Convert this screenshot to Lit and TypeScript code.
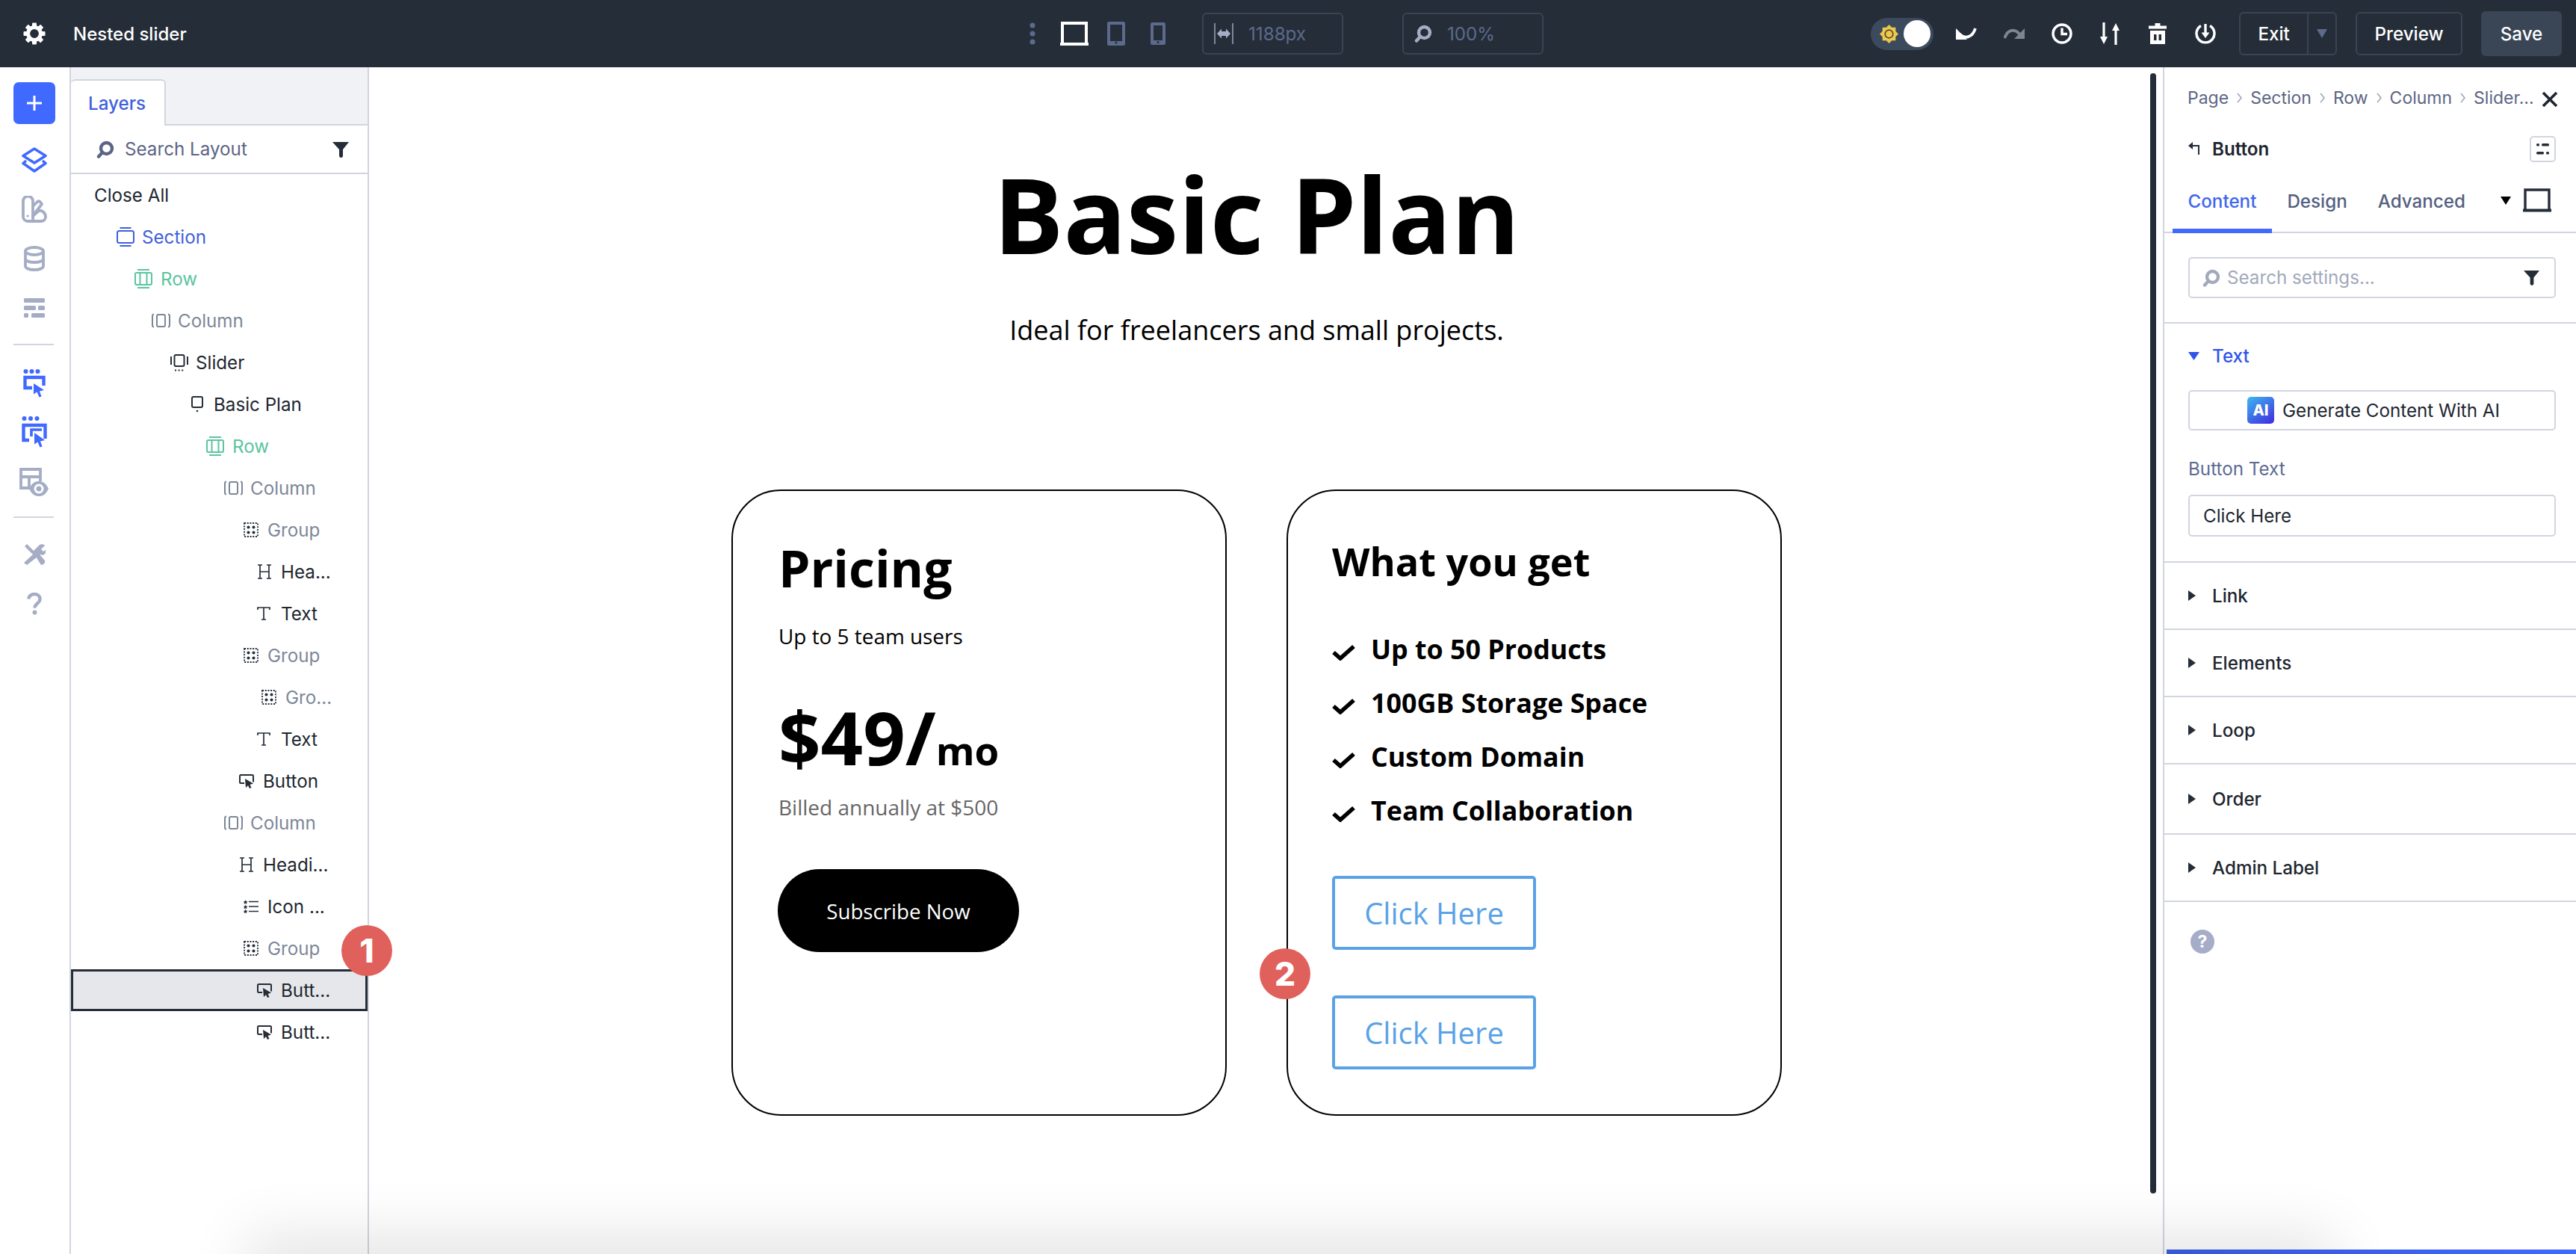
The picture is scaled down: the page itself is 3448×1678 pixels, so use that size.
import { LitElement, html, svg, css } from "lit";
import { customElement } from "lit/decorators.js";

const searchIcon = (c: string, s = 24) => html`<svg width=${s} height=${s} viewBox="0 0 24 24" fill="none"><circle cx="13.5" cy="10.5" r="7.5" stroke=${c} stroke-width="4.4"/><path d="M8 16L3 21.5" stroke=${c} stroke-width="4.4" stroke-linecap="round"/></svg>`;
const funnel = (s = 22) => html`<svg width=${s} height=${s} viewBox="0 0 22 22"><path d="M0 1h22l-8 10v9a2.6 2.6 0 0 1-5 0v-9z" fill="#252d38"/></svg>`;
const ANG = [0, 45, 90, 135, 180, 225, 270, 315];
const gear = () => html`<svg width="30" height="30" viewBox="-15 -15 30 30"><circle r="8.4" fill="none" stroke="#fff" stroke-width="5"/>${ANG.map((a) => svg`<rect x="-3" y="-14.5" width="6" height="6" rx="1" fill="#fff" transform="rotate(${a})"/>`)}</svg>`;
const cursorBox = (c: string) => html`<svg width="30" height="38" viewBox="0 0 30 38" fill="none"><circle cx="3.5" cy="3" r="3" fill=${c}/><circle cx="11.5" cy="3" r="3" fill=${c}/><circle cx="19.5" cy="3" r="3" fill=${c}/><path d="M12 25H2.500V11h25v11" stroke=${c} stroke-width="4.4"/><path d="M14 19l14 9-6 1.500 2.500 7-3 1-3-7-4.500 3z" fill=${c}/></svg>`;
const cursorBox2 = (c: string) => html`<svg width="34" height="44" viewBox="0 0 34 44" fill="none"><circle cx="3.500" cy="3" r="3" fill=${c}/><circle cx="12" cy="3" r="3" fill=${c}/><circle cx="20.500" cy="3" r="3" fill=${c}/><path d="M10 32H2.500V12h29v18" stroke=${c} stroke-width="4.400"/><path d="M13 27v-9h14" stroke=${c} stroke-width="3.600"/><path d="M17 22l14 10-6 1.500 2.500 7-3 1-3-7-4.500 3z" fill=${c}/></svg>`;

const tree: Record<string, (c: string) => unknown> = {
  section: (c) => html`<svg width="24" height="26" viewBox="0 0 24 26" fill="none" stroke=${c} stroke-width="2"><rect x="1" y="5" width="22" height="16" rx="2.500"/><path d="M4.500 1h15M4.500 25h15"/></svg>`,
  row: (c) => html`<svg width="24" height="26" viewBox="0 0 24 26" fill="none" stroke=${c} stroke-width="2"><rect x="1" y="5" width="22" height="16" rx="2"/><path d="M7.500 5v16M16.500 5v16M4 1h16M4 25h16"/></svg>`,
  column: (c) => html`<svg width="25" height="20" viewBox="0 0 25 20" fill="none" stroke=${c} stroke-width="2"><rect x="7" y="2" width="11" height="16" rx="2"/><path d="M3 1.500C1.500 1.500 1 2 1 4v12c0 2 .5 2.500 2 2.500M22 1.500c1.500 0 2 .5 2 2.500v12c0 2-.5 2.500-2 2.500"/></svg>`,
  slider: (c) => html`<svg width="24" height="24" viewBox="0 0 24 24" fill="none" stroke=${c} stroke-width="2"><rect x="5.500" y="2" width="13" height="15" rx="2"/><path d="M1 4v11M23 4v11"/><path d="M6 22.500h13" stroke-dasharray="2 2.600"/></svg>`,
  slide: (c) => html`<svg width="16" height="22" viewBox="0 0 16 22" fill="none" stroke=${c} stroke-width="2"><rect x="1" y="1" width="14" height="14" rx="2"/><circle cx="8" cy="20" r="1.300" fill=${c} stroke="none"/></svg>`,
  group: (c) => html`<svg width="20" height="20" viewBox="0 0 20 20" fill=${c}><rect x="1" y="1" width="18" height="18" fill="none" stroke=${c} stroke-width="1.800" stroke-dasharray="2 1.700"/><circle cx="6.500" cy="6.500" r="2"/><circle cx="13.500" cy="6.500" r="2"/><circle cx="6.500" cy="13.500" r="2"/><circle cx="13.500" cy="13.500" r="2"/></svg>`,
  h: (c) => html`<svg width="20" height="20" viewBox="0 0 20 20" fill="none" stroke=${c} stroke-width="1.700"><path d="M4 1v18M16 1v18M4 10h12M1 1h6M13 1h6M1 19h6M13 19h6"/></svg>`,
  t: (c) => html`<svg width="18" height="18" viewBox="0 0 18 18" fill="none" stroke=${c} stroke-width="1.700"><path d="M1 4V1h16v3M9 1v16M6 17h6"/></svg>`,
  button: (c) => html`<svg width="20" height="20" viewBox="0 0 20 20" fill="none"><path d="M7 13H2.500a1.500 1.500 0 0 1-1.500-1.500v-8A1.500 1.500 0 0 1 2.500 2h15A1.500 1.500 0 0 1 19 3.500v8" stroke=${c} stroke-width="2"/><path d="M8 7l11 6.500-4.500 1.500 2 4-2.500 1-2-4-3 3z" fill=${c}/></svg>`,
  list: (c) => html`<svg width="20" height="18" viewBox="0 0 20 18" fill=${c}><path d="M2.500 0l1 2 2 .2-1.500 1.500.4 2-1.900-1-1.900 1 .4-2L0 2.200 2 2zM2.500 6.500l1 2 2 .2-1.500 1.500.4 2-1.900-1-1.900 1 .4-2L0 8.700l2-.2zM2.500 12.500l1 2 2 .2-1.500 1.500.4 1.800-1.900-.8-1.900.8.4-1.800L0 14.700l2-.2z"/><path d="M7 2.500h13M7 9h13M7 15.500h13" stroke=${c} stroke-width="1.600"/></svg>`,
};

const BLUE = "#3f60dc", GREEN = "#5cc4a0", GREY = "#7d8798", DARK = "#20262f", ICON = "#252d38";
const rows = [
  { t: "Section", k: "section", x: 156, l: 190, c: BLUE, ic: BLUE },
  { t: "Row", k: "row", x: 180, l: 215, c: GREEN, ic: GREEN },
  { t: "Column", k: "column", x: 203, l: 238, c: GREY, ic: GREY },
  { t: "Slider", k: "slider", x: 228, l: 262, c: DARK, ic: ICON },
  { t: "Basic Plan", k: "slide", x: 256, l: 286, c: DARK, ic: ICON },
  { t: "Row", k: "row", x: 276, l: 311, c: GREEN, ic: GREEN },
  { t: "Column", k: "column", x: 300, l: 335, c: GREY, ic: GREY },
  { t: "Group", k: "group", x: 326, l: 358, c: GREY, ic: ICON },
  { t: "Hea...", k: "h", x: 344, l: 376, c: DARK, ic: ICON },
  { t: "Text", k: "t", x: 344, l: 376, c: DARK, ic: ICON },
  { t: "Group", k: "group", x: 326, l: 358, c: GREY, ic: ICON },
  { t: "Gro...", k: "group", x: 350, l: 382, c: GREY, ic: ICON },
  { t: "Text", k: "t", x: 344, l: 376, c: DARK, ic: ICON },
  { t: "Button", k: "button", x: 320, l: 352, c: DARK, ic: ICON },
  { t: "Column", k: "column", x: 300, l: 335, c: GREY, ic: GREY },
  { t: "Headi...", k: "h", x: 320, l: 352, c: DARK, ic: ICON },
  { t: "Icon ...", k: "list", x: 326, l: 358, c: DARK, ic: ICON },
  { t: "Group", k: "group", x: 326, l: 358, c: GREY, ic: ICON },
  { t: "Butt...", k: "button", x: 344, l: 376, c: DARK, ic: ICON, sel: true },
  { t: "Butt...", k: "button", x: 344, l: 376, c: DARK, ic: ICON },
];

const crumbs = ["Page", "Section", "Row", "Column", "Slider..."];
const accordions = ["Link", "Elements", "Loop", "Order", "Admin Label"];
const features = ["Up to 50 Products", "100GB Storage Space", "Custom Domain", "Team Collaboration"];

@customElement("app-root")
export class AppRoot extends LitElement {
  static styles = css`
    :host { display: block; height: 100vh; min-height: 1678px; position: relative; overflow: hidden; background: #fff; font-family: Inter, "Liberation Sans", sans-serif; font-size: 24.2px; color: #20262f; }
    svg { display: block; flex: none; }
    .top { height: 90px; background: #252d38; display: flex; align-items: center; color: #fff; }
    .left { width: 1378px; flex: none; display: flex; align-items: center; }
    .gear { margin-left: 31px; }
    .title { margin-left: 37px; font-weight: 500; font-size: 24px; }
    .center { display: flex; align-items: center; }
    .ml33 { margin-left: 33px; } .ml25 { margin-left: 25px; } .ml34 { margin-left: 34px; } .ml49 { margin-left: 49px; } .ml81 { margin-left: 79px; }
    .readout { width: 189px; height: 56px; box-sizing: border-box; border: 2px solid #3a4452; border-radius: 6px; display: flex; align-items: center; color: #5c6a8c; font-size: 24.2px; }
    .readout svg { margin-left: 14px; }
    .readout span { margin-left: 20px; }
    .right { margin-left: auto; display: flex; align-items: center; padding-right: 19px; }
    .toggle { width: 84px; height: 43px; border-radius: 22px; background: #3c4a5e; display: flex; align-items: center; justify-content: space-between; padding: 0 4px 0 12px; box-sizing: border-box; }
    .knob { width: 36px; height: 36px; border-radius: 50%; background: #fff; }
    .tools { display: flex; margin: 0 13px 0 12px; }
    .tool { width: 64px; height: 30px; display: flex; justify-content: center; align-items: center; }
    .tbtn { height: 58px; box-sizing: border-box; border: 2px solid #3a4452; border-radius: 6px; display: flex; align-items: center; justify-content: center; color: #fff; font-weight: 500; }
    .exit { width: 131px; }
    .exit span { width: 92px; text-align: center; }
    .caretcell { width: 37px; height: 100%; border-left: 2px solid #3a4452; display: flex; align-items: center; justify-content: center; }
    .preview { width: 143px; margin-left: 25px; }
    .save { width: 108px; height: 60px; margin-left: 25px; background: #3a4656; border-radius: 6px; display: flex; align-items: center; justify-content: center; color: #fff; font-weight: 500; }
    .body { display: flex; height: calc(100% - 90px); }
    .rail { width: 95px; box-sizing: border-box; border-right: 2px solid #d2d5de; flex: none; padding: 20px 0 0 18px; }
    .plus { width: 56px; height: 56px; background: #4069ff; border-radius: 7px; display: flex; align-items: center; justify-content: center; }
    .slot { width: 56px; height: 66px; display: flex; align-items: center; justify-content: center; }
    .slots1 { margin-top: 15px; } .slots2 { margin-top: 18px; } .slots3 { margin-top: 16px; }
    .rule { width: 54px; height: 2px; background: #d2d5de; margin-top: 15px; }
    .rule2 { margin-top: 13px; }
    .layers { width: 399px; box-sizing: border-box; border-right: 2px solid #d2d5de; flex: none; }
    .tabbar { height: 78px; background: #f0f2f5; border-bottom: 2px solid #d2d5de; box-sizing: border-box; display: flex; align-items: flex-end; }
    .ltab { width: 127px; height: 62px; margin-bottom: -2px; background: #fff; border: 2px solid #d2d5de; border-left: none; border-bottom: none; border-radius: 6px 6px 0 0; box-sizing: border-box; color: #3f60dc; font-weight: 500; display: flex; align-items: center; padding-left: 23px; font-size: 24.2px; }
    .lsearch { height: 65px; box-sizing: border-box; border-bottom: 2px solid #d2d5de; display: flex; align-items: center; padding: 0 25px 0 34px; color: #5c6485; }
    .lsearch span { margin-left: 14px; flex: 1; }
    .closeall { height: 56px; display: flex; align-items: center; padding-left: 31px; }
    .trow { height: 56px; display: flex; align-items: center; box-sizing: border-box; position: relative; }
    .trow.sel { background: #e6e7ea; outline: 3px solid #252d38; outline-offset: -3px; }
    .ticon { display: flex; align-items: center; flex: none; }
    .canvas { flex: 1; min-width: 0; box-sizing: border-box; padding: 111px 25px 0 0; display: flex; flex-direction: column; align-items: center; font-family: "Open Sans", sans-serif; color: #000; position: relative; }
    h1 { margin: 0; font-size: 139.6px; line-height: 170px; font-weight: 700; }
    .sub { margin-top: 46px; font-size: 36px; line-height: 50px; }
    .cards { margin-top: 188px; display: flex; gap: 80px; }
    .card { width: 663px; height: 838px; box-sizing: border-box; border: 2px solid #000; border-radius: 66px; }
    .c1 { padding: 61px 0 0 60px; } .c2 { padding: 59px 0 0 59px; }
    .pricing { font-size: 67.8px; line-height: 84px; font-weight: 700; padding-left: 1px; }
    .users { margin-top: 29px; font-size: 27.9px; line-height: 40px; padding-left: 1px; }
    .price { margin-top: 60px; font-size: 99px; line-height: 110px; font-weight: 700; padding-left: 1px; white-space: nowrap; }
    .price small { font-size: 52.8px; }
    .billed { margin-top: 1px; font-size: 28px; line-height: 40px; color: #666; padding-left: 1px; }
    .sub-btn { margin-top: 63px; width: 323px; height: 111px; border-radius: 56px; background: #000; color: #fff; display: flex; align-items: center; justify-content: center; font-size: 27.7px; }
    .wyg { font-size: 52.2px; line-height: 70px; font-weight: 700; }
    .feats { margin-top: 46px; }
    .feat { height: 72px; display: flex; align-items: center; font-size: 35.8px; font-weight: 700; gap: 21px; }
    .feat svg { margin-top: 9px; }
    .click { width: 273px; height: 99px; box-sizing: border-box; border: 4px solid #5aa2e6; border-radius: 5px; color: #5aa2e6; display: flex; align-items: center; justify-content: center; font-size: 40px; }
    .click.a { margin-top: 52px; } .click.b { margin-top: 61px; }
    .scroll { position: absolute; right: 9px; top: 8px; width: 8px; height: 1499px; border-radius: 4px; background: #252d38; }
    .panel { width: 553px; flex: none; box-sizing: border-box; border-left: 2px solid #d2d5de; position: relative; }
    .crumbs { height: 82px; display: flex; align-items: center; padding-left: 31px; color: #5c6685; font-size: 23px; }
    .crumbs .sep { margin: 0 11px; }
    .x { position: absolute; left: 505px; top: 32px; }
    .btnrow { height: 54px; display: flex; align-items: center; padding-left: 32px; font-weight: 600; }
    .btnrow span { margin-left: 16px; flex: 1; }
    .mini { width: 35px; height: 35px; box-sizing: border-box; border: 2px solid #d2d5de; border-radius: 5px; margin-right: 27px; display: flex; align-items: center; justify-content: center; }
    .tabs { height: 86px; box-sizing: border-box; border-bottom: 2px solid #d2d5de; display: flex; padding-left: 11px; position: relative; font-weight: 500; color: #555f80; }
    .tab { padding: 0 20.5px; height: 86px; box-sizing: border-box; display: flex; align-items: center; }
    .tab.on { color: #3f66f0; border-bottom: 6px solid #4069ff; padding-top: 6px; }
    .tabend { margin-left: auto; display: flex; align-items: center; padding-right: 32px; gap: 15px; }
    .settings { height: 121px; box-sizing: border-box; border-bottom: 2px solid #d2d5de; padding: 32px 27px 0 32px; }
    .sbox { height: 55px; box-sizing: border-box; border: 2px solid #d2d5de; border-radius: 5px; display: flex; align-items: center; padding: 0 20px 0 17px; color: #a2a9bb; }
    .sbox span { margin-left: 9px; flex: 1; }
    .textsec { height: 320px; box-sizing: border-box; border-bottom: 2px solid #d2d5de; padding: 0 27px 0 32px; }
    .sechead { height: 86px; display: flex; align-items: center; color: #2f55e8; font-weight: 500; }
    .sechead span { margin-left: 17px; }
    .gen { margin-top: 3px; height: 54px; box-sizing: border-box; border: 2px solid #d2d5de; border-radius: 5px; display: flex; align-items: center; justify-content: center; gap: 11px; padding-left: 4px; }
    .ai { width: 36px; height: 36px; border-radius: 5px; background: linear-gradient(145deg, #3fb6f0, #3f2be0); color: #fff; font-size: 20px; font-weight: 800; display: flex; align-items: center; justify-content: center; }
    .lab { margin-top: 35px; color: #5e6a94; line-height: 34px; font-size: 24.2px; }
    .input { margin-top: 17px; height: 56px; box-sizing: border-box; border: 2px solid #d2d5de; border-radius: 5px; display: flex; align-items: center; padding-left: 18px; }
    .acc { height: 90px; box-sizing: border-box; border-bottom: 2px solid #d2d5de; display: flex; align-items: center; padding: 0 0 0 32px; font-weight: 500; }
    .acc.tall { height: 94px; }
    .acc span { margin-left: 22px; }
    .help { margin: 37px 0 0 35px; width: 32px; height: 32px; border-radius: 50%; background: #a5adc8; color: #fff; display: flex; align-items: center; justify-content: center; font-size: 23px; font-weight: 700; }
    .badge { position: absolute; width: 68px; height: 68px; border-radius: 50%; background: #e0615b; color: #fff; font-weight: 800; font-size: 44px; display: flex; align-items: center; justify-content: center; font-family: Inter, sans-serif; z-index: 3; }
    .b1 { left: 457px; top: 1238px; } .b2 { left: 1686px; top: 1269px; }
    .shade { position: absolute; left: 330px; right: 323px; top: 1690px; height: 100px; box-shadow: 0 -38px 80px rgba(0,0,0,.105); pointer-events: none; z-index: 2; }
    .progress { position: absolute; left: 2900px; right: 0; bottom: 0; height: 6px; background: linear-gradient(90deg, #3558d4, #4069ff); z-index: 3; }
  `;

  render() {
    const G = "#a5adc5", B = "#4069ff", M = "#5c6a8c";
    return html`
      <div class="top">
        <div class="left"><div class="gear">${gear()}</div><div class="title">Nested slider</div></div>
        <div class="center">
          <svg width="8" height="30" viewBox="0 0 8 30" fill=${M}><circle cx="4" cy="4" r="3.500"/><circle cx="4" cy="15" r="3.500"/><circle cx="4" cy="26" r="3.500"/></svg>
          <svg class="ml33" width="38" height="32" viewBox="0 0 38 32" fill="none" stroke="#fff" stroke-width="4"><path d="M3 30V2h32v28"/><path d="M0 30h38" stroke-width="4"/></svg>
          <svg class="ml25" width="24" height="32" viewBox="0 0 24 32"><rect width="24" height="32" rx="2.500" fill=${M}/><rect x="4" y="4" width="16" height="22" fill="#252d38"/><circle cx="12" cy="28" r="1.500" fill="#252d38"/></svg>
          <svg class="ml34" width="20" height="30" viewBox="0 0 20 30"><rect width="20" height="30" rx="2.500" fill=${M}/><rect x="4" y="4" width="12" height="20" fill="#252d38"/><circle cx="10" cy="26.500" r="1.500" fill="#252d38"/></svg>
          <div class="readout ml49"><svg width="26" height="28" viewBox="0 0 26 28" fill="none"><path d="M1 0v28M25 0v28" stroke="#a5adc5" stroke-width="1.400"/><path d="M4 14l6-6.500V11h6V7.500l6 6.500-6 6.500V17h-6v3.500z" fill="#a5adc5"/></svg><span>1188px</span></div>
          <div class="readout ml81"><svg width="24" height="26" viewBox="0 0 24 24" fill="none"><circle cx="13.500" cy="10.500" r="7.500" stroke="#a5adc5" stroke-width="4.400"/><path d="M8 16L3 21.500" stroke="#a5adc5" stroke-width="4.400" stroke-linecap="round"/></svg><span>100%</span></div>
        </div>
        <div class="right">
          <div class="toggle">
            <svg width="25" height="25" viewBox="-13 -13 26 26"><g fill="#f0c94a">${ANG.map((a) => svg`<path d="M-4 -9L0 -13L4 -9z" transform="rotate(${a})"/>`)}</g><circle r="10" fill="#f0c94a"/><circle r="5.500" fill="#f0c94a" stroke="#4a4a3a" stroke-width="1.800"/></svg>
            <div class="knob"></div>
          </div>
          <div class="tools">
            <div class="tool"><svg width="28" height="17" viewBox="0 0 28 17" fill="none"><path d="M0 1v15h15z" fill="#fff"/><path d="M5 9c7 6 17 5 21-8" stroke="#fff" stroke-width="3.800"/></svg></div>
            <div class="tool"><svg width="28" height="14" viewBox="0 0 28 14" fill="none"><path d="M28 0v14H14z" fill="#7d8590"/><path d="M22 9C16 0 6 0 1 13" stroke="#7d8590" stroke-width="4"/></svg></div>
            <div class="tool"><svg width="28" height="28" viewBox="0 0 28 28" fill="none" stroke="#fff" stroke-width="3.400"><circle cx="14" cy="14" r="12"/><path d="M14 6.500v8h7"/></svg></div>
            <div class="tool"><svg width="28" height="30" viewBox="0 0 28 30" fill="none"><path d="M6 0v24M22 6v24" stroke="#fff" stroke-width="3.200" stroke-linecap="round"/><path d="M1 19h10L6 29zM17 11h10L22 1z" fill="#fff"/></svg></div>
            <div class="tool"><svg width="24" height="28" viewBox="0 0 24 28"><path d="M8.500 0h7v3.500H24v4H0v-4h8.500zM2 10h20v18H2z" fill="#fff"/><path d="M7 15h3.500v8H7zM13.500 15H17v8h-3.500z" fill="#252d38"/></svg></div>
            <div class="tool"><svg width="28" height="28" viewBox="0 0 28 28" fill="none" stroke="#fff" stroke-width="3.400"><path d="M8 3.500a12 12 0 1 0 12 0"/><path d="M14 1v13"/><path d="M8.500 12.500h11L14 20z" fill="#fff" stroke="none"/></svg></div>
          </div>
          <div class="tbtn exit"><span>Exit</span><div class="caretcell"><svg width="14" height="14" viewBox="0 0 14 14"><path d="M0 1h14L7 13z" fill=${M}/></svg></div></div>
          <div class="tbtn preview">Preview</div>
          <div class="save">Save</div>
        </div>
      </div>
      <div class="body">
        <div class="rail">
          <div class="plus"><svg width="20" height="20" viewBox="0 0 20 20"><path d="M8.500 0h3v8.500H20v3h-8.500V20h-3v-8.500H0v-3h8.500z" fill="#fff"/></svg></div>
          <div class="slots1">
            <div class="slot"><svg width="34" height="34" viewBox="0 0 34 34" fill="none" stroke=${B} stroke-width="3.600" stroke-linejoin="round"><path d="M17 2l15 9.500L17 21 2 11.500z"/><path d="M6 18l-4 3.500L17 32l15-10.500-4-3.500"/></svg></div>
            <div class="slot"><svg width="34" height="36" viewBox="0 0 34 36" fill="none" stroke=${G} stroke-width="3.800" stroke-linejoin="round"><path d="M2 7a6.500 6.500 0 0 1 13 0v27H8a6 6 0 0 1-6-6z"/><path d="M15 14l6-6c2-2 4 0 6 3l-12 16M15 27l8-7c3-1 9 2 9 8 0 4-3 6-6 6H8"/><circle cx="8" cy="27" r="1.600" fill=${G} stroke="none"/></svg></div>
            <div class="slot"><svg width="28" height="34" viewBox="0 0 28 34" fill="none" stroke=${G} stroke-width="3.800"><ellipse cx="14" cy="7" rx="12" ry="5"/><path d="M2 7v20c0 3 5 5 12 5s12-2 12-5V7M2 17c0 3 5 5 12 5s12-2 12-5"/></svg></div>
            <div class="slot"><svg width="28" height="26" viewBox="0 0 28 26" fill=${G}><rect width="28" height="6" rx="1.500"/><rect y="10" width="16" height="6" rx="1.500"/><rect x="19" y="10" width="9" height="6" rx="1.500"/><rect y="20" width="6" height="6" rx="1.500"/><rect x="10" y="20" width="18" height="6" rx="1.500"/></svg></div>
          </div>
          <div class="rule"></div>
          <div class="slots2">
            <div class="slot">${cursorBox(B)}</div>
            <div class="slot">${cursorBox2(B)}</div>
            <div class="slot"><svg width="40" height="38" viewBox="0 0 40 38" fill="none"><path d="M18 27H2V2h26v16M2 12h26M13 12v15" stroke=${G} stroke-width="3.800"/><path d="M13 28c4-8 8-10 13-10s9 2 13 10c-4 8-8 10-13 10s-9-2-13-10z" fill=${G}/><circle cx="26" cy="28" r="6.500" fill="#fff"/><circle cx="26" cy="28" r="3.500" fill=${G}/></svg></div>
          </div>
          <div class="rule rule2"></div>
          <div class="slots3">
            <div class="slot"><svg width="30" height="30" viewBox="0 0 30 30" fill=${G}><path d="M2 4l3-3 9 9 8-8c2-1 6-1 7 1l-5 5 3 3 4-3c1 3-1 6-3 7-2 1-3 1-5 0L5 29l-4-3 12-11z"/><path d="M17 18l5-3 7 8c1 3-2 6-5 6z"/></svg></div>
            <div class="slot"><svg width="20" height="30" viewBox="0 0 20 30" fill="none"><path d="M2.500 8.500c0-4 3.500-6.500 7.500-6.500s7.500 2.500 7.500 6.500c0 6-7 6-7 12" stroke=${G} stroke-width="4.400"/><circle cx="10.500" cy="26.500" r="3" fill=${G}/></svg></div>
          </div>
        </div>
        <div class="layers">
          <div class="tabbar"><div class="ltab">Layers</div></div>
          <div class="lsearch">${searchIcon("#5c6485")}<span>Search Layout</span>${funnel()}</div>
          <div class="closeall">Close All</div>
          ${rows.map((r) => html`
            <div class="trow ${r.sel ? "sel" : ""}" style="padding-left:${r.x - 95}px;color:${r.c}">
              <div class="ticon" style="width:${r.l - r.x}px">${tree[r.k](r.ic)}</div><span>${r.t}</span>
            </div>`)}
        </div>
        <div class="canvas">
          <h1>Basic Plan</h1>
          <div class="sub">Ideal for freelancers and small projects.</div>
          <div class="cards">
            <div class="card c1">
              <div class="pricing">Pricing</div>
              <div class="users">Up to 5 team users</div>
              <div class="price">$49/<small>mo</small></div>
              <div class="billed">Billed annually at $500</div>
              <div class="sub-btn">Subscribe Now</div>
            </div>
            <div class="card c2">
              <div class="wyg">What you get</div>
              <div class="feats">
                ${features.map((f) => html`<div class="feat"><svg width="31" height="22" viewBox="0 0 31 22" fill="none"><path d="M2 11l9 8L29 3" stroke="#000" stroke-width="5.500"/></svg><span>${f}</span></div>`)}
              </div>
              <div class="click a">Click Here</div>
              <div class="click b">Click Here</div>
            </div>
          </div>
          <div class="scroll"></div>
        </div>
        <div class="panel">
          <div class="crumbs">${crumbs.map((c, i) => html`${i ? html`<svg class="sep" width="7" height="14" viewBox="0 0 7 14" fill="none"><path d="M1 1l5 6-5 6" stroke="#a0a6b4" stroke-width="1.600"/></svg>` : ""}<span>${c}</span>`)}</div>
          <svg class="x" width="22" height="22" viewBox="0 0 22 22" fill="none"><path d="M2 2l18 18M20 2L2 20" stroke="#20262f" stroke-width="3.600"/></svg>
          <div class="btnrow"><svg width="16" height="18" viewBox="0 0 16 18" fill="none"><path d="M4 5h10v12" stroke="#252d38" stroke-width="2"/><path d="M6 0v10L0 5z" fill="#252d38"/></svg><span>Button</span><div class="mini"><svg width="17" height="15" viewBox="0 0 17 15" fill="#252d38"><rect width="4" height="3.500" rx="1.500"/><rect x="7" width="10" height="3.500" rx="1.500"/><rect y="11" width="10" height="3.500" rx="1.500"/><rect x="13" y="11" width="4" height="3.500" rx="1.500"/></svg></div></div>
          <div class="tabs">
            <div class="tab on">Content</div><div class="tab">Design</div><div class="tab">Advanced</div>
            <div class="tabend"><svg width="14" height="11" viewBox="0 0 14 11"><path d="M0 0h14L7 11z" fill="#000"/></svg><svg width="40" height="32" viewBox="0 0 38 32" fill="none" stroke="#252d38" stroke-width="3.400"><path d="M3 30V2h32v28"/><path d="M0 29.500h38" stroke-width="4"/></svg></div>
          </div>
          <div class="settings"><div class="sbox">${searchIcon("#a2a9bb")}<span>Search settings...</span>${funnel(21)}</div></div>
          <div class="textsec">
            <div class="sechead"><svg width="15" height="11" viewBox="0 0 15 11"><path d="M0 0h15L7.500 11z" fill="#2f55e8"/></svg><span>Text</span></div>
            <div class="gen"><div class="ai">AI</div>Generate Content With AI</div>
            <div class="lab">Button Text</div>
            <div class="input">Click Here</div>
          </div>
          ${accordions.map((a) => html`<div class="acc ${a === "Order" ? "tall" : ""}"><svg width="10" height="14" viewBox="0 0 10 14"><path d="M0 0l10 7-10 7z" fill="#252d38"/></svg><span>${a}</span></div>`)}
          <div class="help">?</div>
        </div>
      </div>
      <div class="badge b1">1</div>
      <div class="badge b2">2</div>
      <div class="shade"></div>
      <div class="progress"></div>
    `;
  }
}
